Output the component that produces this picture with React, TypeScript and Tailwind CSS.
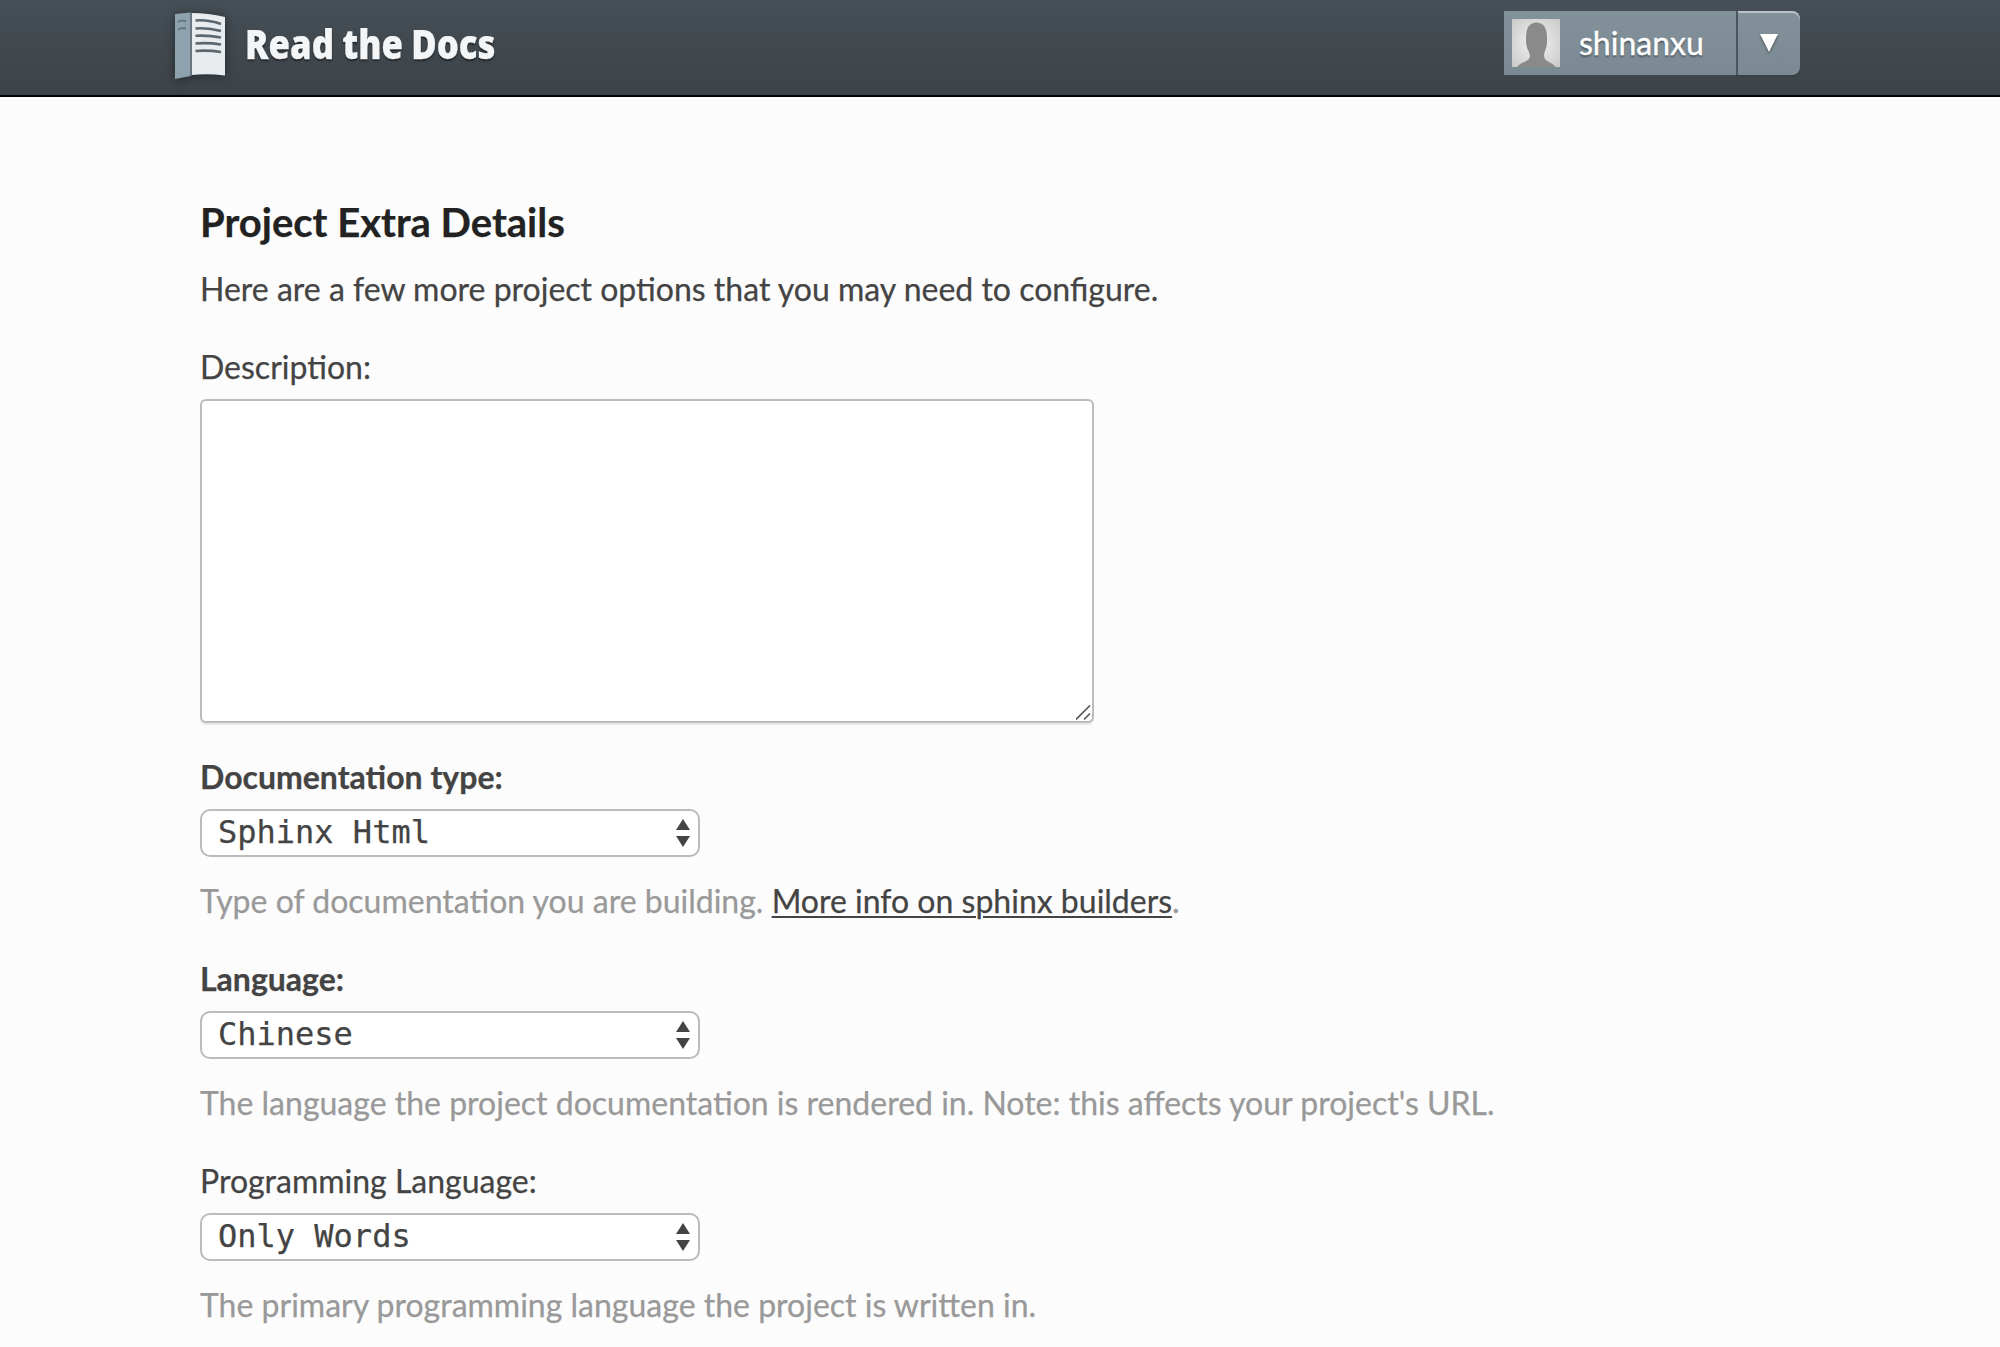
import React from "react";

function BookLogo() {
  return (
    <svg width="64" height="80" viewBox="168 4 64 80" className="h-20 w-16 shrink-0 [filter:drop-shadow(0_1px_5px_rgba(0,0,0,0.45))]">
      <path d="M175 14 L191 12.500 L191 76 L175 79 Z" fill="#8ea1ae" />
      <path d="M191.500 13 Q208 13 225 17 L225 75.500 Q208 73.500 191.500 75 Z" fill="#e8ecef" />
      <path d="M191 12.500 V76" stroke="#5d6a73" strokeWidth="1.4" />
      <g stroke="#5b666e" strokeWidth="2.600" fill="none">
        <path d="M195.500 20.500 Q208 19.500 221 24" />
        <path d="M195.500 28.500 Q208 27.500 221 31" />
        <path d="M195.500 35.800 Q208 35 221 37.500" />
        <path d="M195.500 43.500 Q208 42.300 221 44.500" />
        <path d="M195.500 51 Q208 50 221 52" />
      </g>
      <g stroke="#64747f" strokeWidth="2" fill="none">
        <path d="M178 22 Q182 19.500 186 21.500" />
        <path d="M178 29.500 Q182 27 186 28.500" />
      </g>
    </svg>
  );
}

function Avatar() {
  return (
    <svg viewBox="0 0 48 48" className="size-12 shrink-0">
      <defs>
        <radialGradient id="avatarBg" r="0.7">
          <stop offset="0" stopColor="#f4f4f4" />
          <stop offset="1" stopColor="#c8c8c8" />
        </radialGradient>
      </defs>
      <rect width="48" height="48" fill="url(#avatarBg)" />
      <path
        d="M5 48 C8 43 16 43 17.500 39 C18.500 36 17 33 15.500 30 C13.500 25 13.800 18 14.500 13 C15.500 7 19 3.500 24.500 3.500 C30 3.500 33.500 7 34.500 13 C35.300 18 35.500 25 33.800 30 C32.500 33 31.500 36 32.500 39 C34 43 40 43 43.500 48 Z"
        fill="#8a8a8a"
      />
    </svg>
  );
}

function Header() {
  return (
    <header className="h-[97px] border-b-2 border-black bg-linear-to-b from-[#464f56] to-[#3c4348]">
      <div className="mx-auto flex w-[1632px] items-start justify-between pr-4">
        <a className="-ml-4 flex items-start pt-1">
          <BookLogo />
          <span className="ml-[13px] mt-2.5 origin-left scale-x-[0.848] font-['Open_Sans'] text-[41px] font-extrabold leading-[58px] whitespace-nowrap text-[#f4f5f7] [text-shadow:0_2px_2px_rgba(0,0,0,0.5)] [word-spacing:-1px]">
            Read the Docs
          </span>
        </a>
        <div className="mt-[11px] flex h-16 text-white">
          <button className="flex w-[232px] items-center bg-linear-to-b from-[#83929a] to-[#7b8a92] pl-2">
            <Avatar />
            <span className="ml-[19px] text-[32px] leading-[38px] [text-shadow:0_2px_2px_rgba(0,0,0,0.4)] [-webkit-text-stroke:0.4px_white]">shinanxu</span>
          </button>
          <button className="ml-0.5 flex w-[62px] justify-center rounded-r-lg bg-linear-to-b from-[#83929a] to-[#7b8a92] pt-[23px] shadow-[inset_0_2px_0_#b9c1c7,0_2px_0_#393f45,-2px_0_0_#4b555d]">
            <svg viewBox="0 0 18 18" className="size-[18px] [filter:drop-shadow(0_2px_1px_rgba(0,0,0,0.4))]">
              <path d="M0 0H18L9 18Z" fill="#fff" />
            </svg>
          </button>
        </div>
      </div>
    </header>
  );
}

type FieldProps = { label: string; value: string; required?: boolean; children: React.ReactNode };

function SelectField({ label, value, required, children }: FieldProps) {
  return (
    <div className="h-[202px]">
      <label className={required ? "block leading-[38px] font-bold" : "block leading-[38px]"}>{label}</label>
      <div className="mt-[13px] flex h-12 w-[500px] items-center justify-between rounded-[10px] border-2 border-[#bbb] bg-white pr-2 pl-4 font-['DejaVu_Sans_Mono',monospace]">
        <span className="pb-0.5 leading-[38px]">{value}</span>
        <svg viewBox="0 0 14 28" className="h-7 w-3.5" fill="#444">
          <path d="M7 0L14 11H0Z M0 17H14L7 28Z" />
        </svg>
      </div>
      <p className="mt-[25px] leading-[38px] text-[#999]">{children}</p>
    </div>
  );
}

export default function App() {
  return (
    <div className="h-[1347px] overflow-hidden bg-[#fcfcfc] font-[Lato,sans-serif] text-[32px] text-[#444] [-webkit-text-stroke:0.25px_currentColor]">
      <Header />
      <main className="mx-auto w-[1600px]">
        <h1 className="pt-[101px] text-[40px] leading-[48px] font-bold text-[#222]">Project Extra Details</h1>
        <p className="mt-6 leading-[38px]">Here are a few more project options that you may need to configure.</p>
        <label className="mt-10 block leading-[38px]">Description:</label>
        <div className="mt-[13px] flex h-[324px] w-[894px] items-end justify-end rounded-md border-2 border-[#bbb] bg-white shadow-[0_2px_0_#e9e9e9]">
          <svg viewBox="0 0 16 16" className="size-4" fill="none" stroke="#555" strokeWidth="1.600">
            <path d="M0 14.500L14 0.500M8 14.500L14 8.500" />
          </svg>
        </div>
        <form className="mt-[35px]">
          <SelectField label="Documentation type:" value="Sphinx Html" required>
            Type of documentation you are building.{" "}
            <a className="text-[#444] underline decoration-2 underline-offset-[3px]">More info on sphinx builders</a>.
          </SelectField>
          <SelectField label="Language:" value="Chinese" required>
            The language the project documentation is rendered in. Note: this affects your project's URL.
          </SelectField>
          <SelectField label="Programming Language:" value="Only Words">
            The primary programming language the project is written in.
          </SelectField>
        </form>
      </main>
    </div>
  );
}
